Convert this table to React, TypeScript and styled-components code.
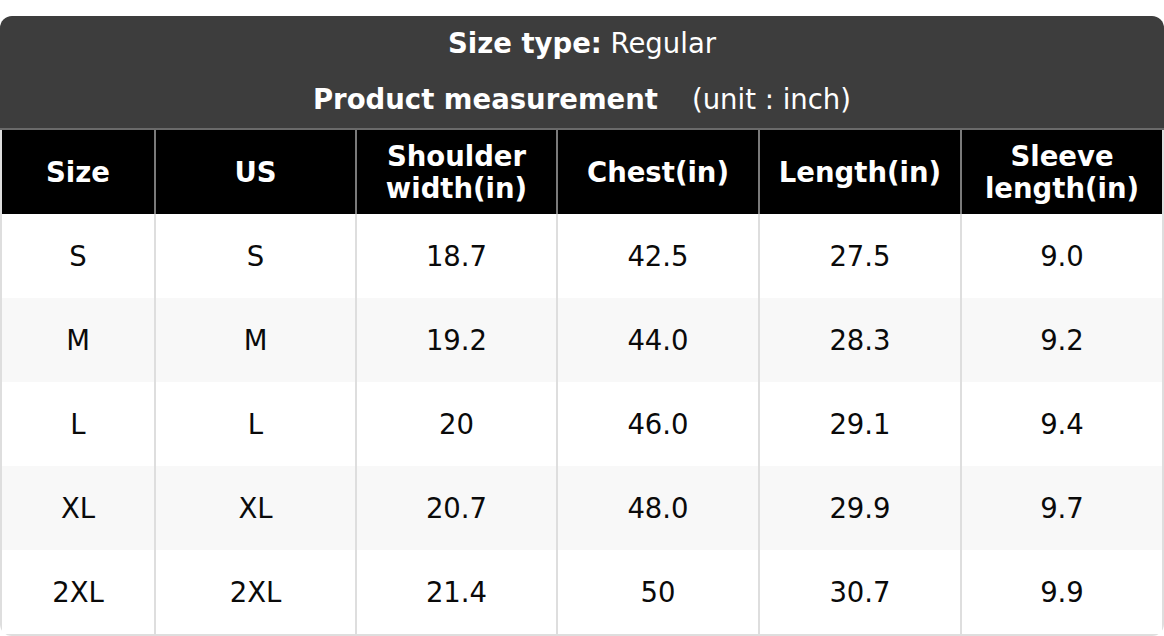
import React from "react";
import styled, {createGlobalStyle} from "styled-components";

const GlobalStyle = createGlobalStyle`
  html, body {
    margin: 0;
    padding: 0;
    background: #ffffff;
  }
  body {
    font-family: "DejaVu Sans", "Liberation Sans", sans-serif;
  }
`;

const Page = styled.div`
  padding-top: 16px;
  width: 1164px;
`;

const Card = styled.div`
  width: 1164px;
  border-radius: 12px 12px 0 0;
  overflow: hidden;
`;

const Caption = styled.div`
  background: #3d3d3d;
  color: #ffffff;
  border-bottom: 2px solid #6a6a6a;
`;

const CaptionLine = styled.div`
  height: 56px;
  display: flex;
  align-items: center;
  justify-content: center;
  font-size: 27.5px;
  line-height: 1;
`;

const Strong = styled.b`
  font-weight: bold;
`;

const Unit = styled.span`
  margin-left: 34px;
`;

const Table = styled.table`
  width: 1164px;
  table-layout: fixed;
  border-collapse: separate;
  border-spacing: 0;
  border: 2px solid #dedede;
  border-top: none;
  border-radius: 0 0 12px 12px;
  font-size: 27.5px;
`;

const Th = styled.th`
  height: 84px;
  padding: 0 6px;
  background: #000000;
  color: #ffffff;
  font-weight: bold;
  line-height: 32px;
  text-align: center;
  box-sizing: border-box;
  & + & {
    border-left: 2px solid #7a7a7a;
  }
`;

const Tr = styled.tr<{ $striped: boolean }>`
  background: ${p => (p.$striped ? "#f8f8f8" : "#ffffff")};
`;

const Td = styled.td`
  height: 84px;
  padding: 0;
  color: #0a0a0a;
  text-align: center;
  box-sizing: border-box;
  & + & {
    border-left: 2px solid #dedede;
  }
`;

const columns = ["Size", "US", "Shoulder width(in)", "Chest(in)", "Length(in)", "Sleeve length(in)"];
const widths = [152, 201, 201, 202, 202, 202];

const rows = [
    ["S", "S", "18.7", "42.5", "27.5", "9.0"],
    ["M", "M", "19.2", "44.0", "28.3", "9.2"],
    ["L", "L", "20", "46.0", "29.1", "9.4"],
    ["XL", "XL", "20.7", "48.0", "29.9", "9.7"],
    ["2XL", "2XL", "21.4", "50", "30.7", "9.9"],
];

const App = () => {
    return (
        <>
            <GlobalStyle/>
            <Page>
                <Card>
                    <Caption>
                        <CaptionLine><Strong>Size type:</Strong>&nbsp;Regular</CaptionLine>
                        <CaptionLine><Strong>Product measurement</Strong><Unit>(unit : inch)</Unit></CaptionLine>
                    </Caption>
                </Card>
                <Table>
                    <colgroup>
                        {widths.map((w, i) => <col key={i} style={{width: w}}/>)}
                    </colgroup>
                    <thead>
                        <tr>
                            {columns.map(c => <Th key={c}>{c}</Th>)}
                        </tr>
                    </thead>
                    <tbody>
                        {rows.map((r, i) => (
                            <Tr key={r[0]} $striped={i % 2 === 1}>
                                {r.map((v, j) => <Td key={j}>{v}</Td>)}
                            </Tr>
                        ))}
                    </tbody>
                </Table>
            </Page>
        </>
    )
}

export default App;
